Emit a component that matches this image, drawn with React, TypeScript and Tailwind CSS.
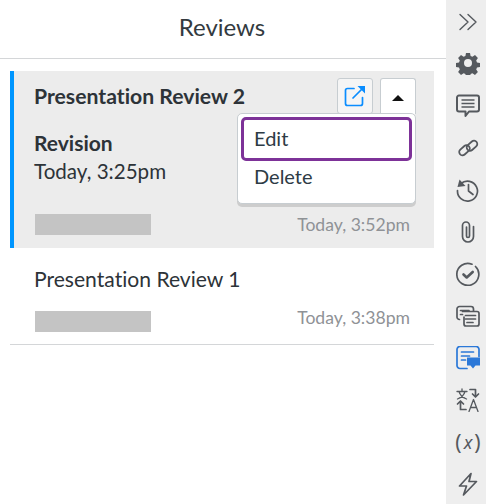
import React from "react";

const G = "#55595e";

function Rail() {
  const common = { fill: "none", stroke: G, strokeWidth: 1.7, strokeLinecap: "round" as const, strokeLinejoin: "round" as const };
  return (
    <div className="flex h-[504px] w-[40px] shrink-0 flex-col items-center bg-[#eeeeee] pl-[4px] pt-[10px]">
      <div className="flex flex-col items-center gap-[18px]">
        <svg width="24" height="24" viewBox="0 0 24 24" {...common} strokeWidth={1.4}><path d="M4 4.500l8 7.500-8 7.500M12 4.500l8 7.500-8 7.500" /></svg>
        <svg width="24" height="24" viewBox="0 0 24 24" fill={G} className="-mt-[1px] mb-[1px]"><path fillRule="evenodd" d="M10 2h4l.6 3 1.800.8 2.600-1.700 2.900 2.900-1.700 2.600.8 1.800 3 .6v4l-3 .6-.8 1.800 1.700 2.600-2.900 2.900-2.600-1.700-1.800.8-.6 3h-4l-.6-3-1.800-.8-2.600 1.700-2.900-2.900 1.700-2.600-.8-1.800-3-.6v-4l3-.6.8-1.800-1.700-2.600 2.900-2.900 2.600 1.700 1.800-.8zM12 8a4 4 0 100 8 4 4 0 000-8z" /></svg>
        <svg width="24" height="24" viewBox="0 0 24 24" {...common} strokeWidth={2}><path d="M1 3.500a2 2 0 012-2h18a2 2 0 012 2v12a2 2 0 01-2 2h-8l-3.500 4.500v-4.500H3a2 2 0 01-2-2z" /><path d="M5.500 6h13M5.500 9.500h13M5.500 13h13" strokeLinecap="butt" strokeWidth={1.600} /></svg>
        <svg width="24" height="24" viewBox="0 0 24 24" {...common} strokeWidth={1.800}>
          <rect x="10" y="6.500" width="12" height="6.500" rx="3.250" transform="rotate(-42 16 9.750)" />
          <rect x="2.500" y="11" width="12" height="6.500" rx="3.250" transform="rotate(-42 8.500 14.250)" />
        </svg>
        <svg width="24" height="24" viewBox="0 0 24 24" {...common}><path d="M5 5.500a10 10 0 11-3.500 7" /><path d="M12.500 6.500v6.500l4.500 3.500" /><path d="M1.500 9l2-7.500 6 6.500z" fill={G} stroke="none" /></svg>
        <svg width="24" height="24" viewBox="0 0 24 24" {...common}><path d="M17.500 6.500v10a5.500 5.500 0 01-11 0V5.500a3.500 3.500 0 017 0v10.500a1.500 1.500 0 01-3 0V7" /></svg>
        <svg width="24" height="24" viewBox="0 0 24 24" {...common}><path d="M19.500 4.500a11 11 0 11-3.500-2.300" /><path d="M7.500 12.500l3.200 3 6-5.500" strokeWidth={2.600} /></svg>
        <svg width="24" height="24" viewBox="0 0 24 24" {...common}><path d="M3.500 15.500a2.500 2.500 0 01-2.500-2.500v-8a2.500 2.500 0 012.500-2.500h11.500a2.500 2.500 0 012.500 2.500v2" /><path d="M6.500 7.500h14.500a2 2 0 012 2v10.500a2 2 0 01-2 2h-11a2 2 0 01-2-2v-7" /><path d="M4.500 6.500h8.500M4.500 10.500h2M9.500 11.500h10M9.500 15h10M11 18.500h6" /></svg>
        <svg width="24" height="24" viewBox="0 0 24 24" fill="none" stroke="#2b78d8" strokeWidth={1.700} strokeLinecap="round"><path d="M11 22.500H4a3 3 0 01-3-3v-16a3 3 0 013-3h16a3 3 0 013 3v7" /><path d="M5.500 6h12M5.500 10h8M5.500 14h4" /><path d="M11 11.500h13v8h-4.500l-2.500 3-2.500-3H11z" fill="#2b78d8" stroke="none" /></svg>
        <svg width="24" height="24" viewBox="0 0 24 24" {...common} strokeWidth={1.300}><path d="M1 3.500h10M6 1v2.500M9 3.500c-1 3.500-3.500 6-7.500 7.500M3 3.500c1 3.500 3.500 6 7.500 7.500" /><path d="M14 1.500h5.500v6.500M16.500 6l3 3 3-3" strokeWidth={1.700} /><path d="M10 21.500H4.500v-7M1.500 16l3-3 3 3" strokeWidth={1.700} /><path d="M13 23.500l4.500-12 4.500 12M14.500 19.500h6" /></svg>
        <span className="flex h-[24px] w-[26px] items-center justify-center text-[21px] leading-none text-[#55595e]" style={{ fontFamily: '"Noto Sans", sans-serif' }}>(<i className="mx-[2px] text-[18px]">x</i>)</span>
        <svg width="24" height="24" viewBox="0 0 24 24" {...common}><path d="M15 1.500L3.500 14h7l-3 9 13-13.500h-7.500z" /></svg>
      </div>
    </div>
  );
}

function Stamp({ children, up }: { children: React.ReactNode; up?: boolean }) {
  return (
    <div className="flex items-start justify-between">
      <div className="ml-[1px] h-[21px] w-[116px] bg-[#c4c4c4]" />
      <span className={up ? "-mt-[4px] text-[17.6px] leading-[21px] text-[#8f9296]" : "text-[17.6px] leading-[21px] text-[#8f9296]"}>{children}</span>
    </div>
  );
}

export default function App() {
  return (
    <div className="flex h-[504px] w-[486px] overflow-hidden bg-white text-[#2d3b45] [font-variant-ligatures:none]" style={{ fontFamily: 'Lato, "Noto Sans", sans-serif' }}>
      <div className="flex-1">
        <h1 className="flex h-[59px] items-center justify-center border-b border-[#d4d6d8] pb-[5px] pr-[2px] text-[24px] font-normal text-[#333a40]">Reviews</h1>
        <div className="pl-[10px] pr-[12px] pt-[12px]">
          <div className="relative h-[177px] border-l-4 border-[#0096ff] bg-[#ececec] pl-[20px] pr-[24px] pt-[7px]">
            <div className="-mr-[6px] flex h-[36px] items-center justify-between">
              <h2 className="pt-[1px] text-[21.2px] font-bold text-[#2d3338]">Presentation Review 2</h2>
              <div className="flex gap-[7px]">
                <button className="flex h-[36px] w-[36px] items-center justify-center rounded-[3px] border border-[#c7cdd1] bg-[#f5f5f5]">
                  <svg width="22" height="22" viewBox="0 0 22 22" fill="none" stroke="#0a8dff" strokeWidth="1.700" strokeLinecap="round" strokeLinejoin="round">
                    <path d="M10 3.500H3.500a2 2 0 00-2 2v13a2 2 0 002 2h13a2 2 0 002-2v-6" />
                    <path d="M9 13L18 4" />
                    <path d="M13.500 1h7.500v7.500z" fill="#0a8dff" stroke="none" />
                  </svg>
                </button>
                <button className="flex h-[36px] w-[36px] items-center justify-center rounded-t-[3px] border border-b-0 border-[#c7cdd1] bg-white pt-[2px]">
                  <svg width="12" height="6" viewBox="0 0 12 6" fill="#111"><path d="M6 0l6 6H0z" /></svg>
                </button>
              </div>
            </div>
            <div className="mt-[15px] text-[21px] font-bold leading-[28px] text-[#2d3338]">Revision</div>
            <div className="text-[20.6px] leading-[28px] text-[#2d3338]">Today, 3:25pm</div>
            <div className="mt-[29px]"><Stamp>Today, 3:52pm</Stamp></div>
            <div className="absolute left-[223px] top-[42px] h-[91px] w-[179px] rounded-[5px] border border-[#c7cdd1] bg-white p-[3px] shadow-[0_3px_0_rgba(0,0,0,0.13)]">
              <div className="flex h-[44px] items-center rounded-[5px] border-[3px] border-[#7d3298] pb-[2px] pl-[10px] text-[20px] text-[#2d3b45]">Edit</div>
              <div className="flex h-[32px] items-center pb-[2px] pl-[13px] text-[20px] text-[#2d3b45]">Delete</div>
            </div>
          </div>
          <div className="h-[97px] border-b border-[#d4d6d8] pl-[24px] pr-[24px] pt-[17px]">
            <div className="text-[21.1px] leading-[28px] text-[#2d3338]">Presentation Review 1</div>
            <div className="mt-[18px]"><Stamp up>Today, 3:38pm</Stamp></div>
          </div>
        </div>
      </div>
      <Rail />
    </div>
  );
}
